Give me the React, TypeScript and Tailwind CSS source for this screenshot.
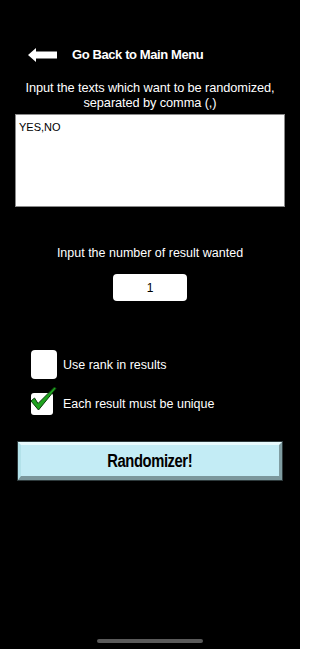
import React from "react";

function Arrow() {
  return (
    <svg width="29" height="14" viewBox="0 0 29 14" className="block">
      <path d="M0 7 L8 0 L8 3.5 L29 3.5 L29 10.5 L8 10.5 L8 14 Z" fill="#ffffff" />
    </svg>
  );
}

function Check() {
  return (
    <svg width="30" height="28" viewBox="0 0 30 28" className="absolute left-[-1px] top-[-7px]">
      <path
        d="M1 15 L4.5 12 L8 17.5 L24.5 1 L26 2.5 L8.5 24 Z"
        fill="#1fa31f"
        stroke="#0b3a0b"
        strokeWidth="1"
        strokeLinejoin="round"
      />
    </svg>
  );
}

export default function App() {
  return (
    <div
      className="w-[300px] h-[649px] bg-black flex flex-col text-white overflow-hidden"
      style={{ fontFamily: '"Liberation Sans", Arial, sans-serif' }}
    >
      <div className="flex items-center pt-[48px] pl-[28px] h-[62px]">
        <Arrow />
        <span className="ml-[15px] text-[13px] font-bold tracking-[-0.4px] leading-[14px]">
          Go Back to Main Menu
        </span>
      </div>

      <div className="mt-[18px] text-center text-[12.8px] leading-[15px] tracking-[-0.1px]">
        <div>Input the texts which want to be randomized,</div>
        <div>separated by comma (,)</div>
      </div>

      <div className="mx-[15px] mt-[4px] h-[93px] bg-white border border-[#8a8a8a] px-[3px] pt-[6px] text-black text-[11px] leading-[13px]">
        YES,NO
      </div>

      <div className="mt-[39px] text-center text-[12.5px] leading-[14px]">
        Input the number of result wanted
      </div>

      <div className="mt-[14px] flex justify-center">
        <div className="w-[74px] h-[27px] bg-white rounded-[4px] flex items-center justify-center text-black text-[12px]">
          1
        </div>
      </div>

      <div className="mt-[49px] ml-[31px] flex items-center">
        <div className="w-[26px] h-[29px] bg-white rounded-[4px]" />
        <span className="ml-[6px] text-[12.5px] leading-[14px]">Use rank in results</span>
      </div>

      <div className="mt-[14px] ml-[31px] flex items-center">
        <div className="relative w-[22px] h-[22px] bg-white rounded-[3px]">
          <Check />
        </div>
        <span className="ml-[10px] text-[12.5px] leading-[14px]">Each result must be unique</span>
      </div>

      <div className="mt-[26px] mx-[17px] h-[40px] border border-[#2e3a3c] flex">
        <div className="flex-1 flex items-center justify-center bg-[#c3ecf5] border-t-[3px] border-l-[3px] border-b-[4px] border-r-[3px] border-t-[#e8fbfe] border-l-[#b3e2ea] border-b-[#7b979c] border-r-[#7f9ca1]">
          <span className="text-black text-[18px] font-bold tracking-[-0.5px] scale-x-[0.82] inline-block leading-[20px]">
            Randomizer!
          </span>
        </div>
      </div>

      <div className="mt-auto mb-[6px] flex justify-center">
        <div className="w-[106px] h-[4px] rounded-full bg-[#5a5a5a]" />
      </div>
    </div>
  );
}
